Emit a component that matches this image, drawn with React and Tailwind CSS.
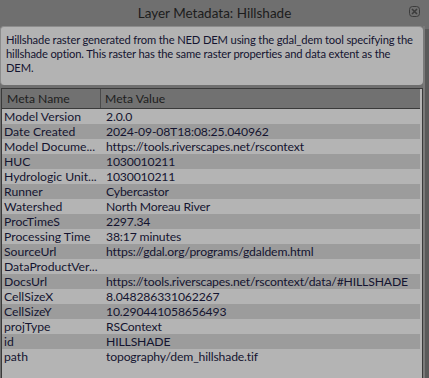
import React from 'react';

const rows = [
  ['Model Version', '2.0.0'],
  ['Date Created', '2024-09-08T18:08:25.040962'],
  ['Model Docume...', 'https://tools.riverscapes.net/rscontext'],
  ['HUC', '1030010211'],
  ['Hydrologic Unit...', '1030010211'],
  ['Runner', 'Cybercastor'],
  ['Watershed', 'North Moreau River'],
  ['ProcTimeS', '2297.34'],
  ['Processing Time', '38:17 minutes'],
  ['SourceUrl', 'https://gdal.org/programs/gdaldem.html'],
  ['DataProductVer...', ''],
  ['DocsUrl', 'https://tools.riverscapes.net/rscontext/data/#HILLSHADE'],
  ['CellSizeX', '8.048286331062267'],
  ['CellSizeY', '10.290441058656493'],
  ['projType', 'RSContext'],
  ['id', 'HILLSHADE'],
  ['path', 'topography/dem_hillshade.tif'],
];

const CloseIcon = () => (
  <svg width="11" height="11" viewBox="0 0 11 11" fill="none">
    <rect x="0.5" y="0.5" width="10" height="10" rx="3" stroke="#3c3c3c" />
    <path d="M3 3 L8 8 M8 3 L3 8" stroke="#3c3c3c" strokeWidth="1.6" />
  </svg>
);

export default function App() {
  return (
    <div className="w-[429px] h-[378px] bg-[#6f6f6f] flex flex-col overflow-hidden font-['Lato',sans-serif]">
      {/* Title bar */}
      <div className="relative h-[26px] shrink-0 flex items-center justify-center text-[13.5px] text-[#1c1c1c]">
        <span>Layer Metadata: Hillshade</span>
        <div className="absolute right-[9px] top-[6px]">
          <CloseIcon />
        </div>
      </div>

      <div className="flex flex-1 min-h-0">
        <div className="w-[423px] flex flex-col">
          {/* Description */}
          <div className="h-[59px] shrink-0 bg-[#b3b3b3] rounded-[4px] border-t border-l border-[#8c8c8c] pl-[5px] pt-[6px] text-[11.2px] tracking-[-0.15px] leading-[14px] text-[#141430] whitespace-nowrap">
            <div>Hillshade raster generated from the NED DEM using the gdal_dem tool specifying the</div>
            <div>hillshade option. This raster has the same raster properties and data extent as the</div>
            <div>DEM.</div>
          </div>

          {/* Table */}
          <div className="mt-[3px] ml-[1px] flex-1 border border-b-0 border-[#3a3a3a] bg-[#b4b4b4] pr-[2px] text-[12.2px] leading-[15px] text-[#141430]">
            <div className="flex h-[20px] bg-[#717171] border-b border-[#3a3a3a] text-[#1e1e1e]">
              <div className="w-[99px] pl-[5px] flex items-center border-r border-[#4a4a4a]">Meta Name</div>
              <div className="pl-[4px] flex items-center">Meta Value</div>
            </div>
            {rows.map(([name, value], i) => (
              <div
                key={name}
                className={`flex h-[15px] items-center ${i % 2 === 1 ? 'bg-[#9c9c9c]' : 'bg-[#b4b4b4]'}`}
              >
                <div className="w-[99px] shrink-0 pl-[2px] whitespace-nowrap overflow-hidden">{name}</div>
                <div className="pl-[5px] whitespace-nowrap tracking-[-0.15px]">{value}</div>
              </div>
            ))}
          </div>
        </div>
        <div className="flex-1 flex">
          <div className="w-[2px] bg-[#7a7a7a]" />
          <div className="flex-1 mt-[3px] bg-[#5a5a5a]" />
        </div>
      </div>
    </div>
  );
}
